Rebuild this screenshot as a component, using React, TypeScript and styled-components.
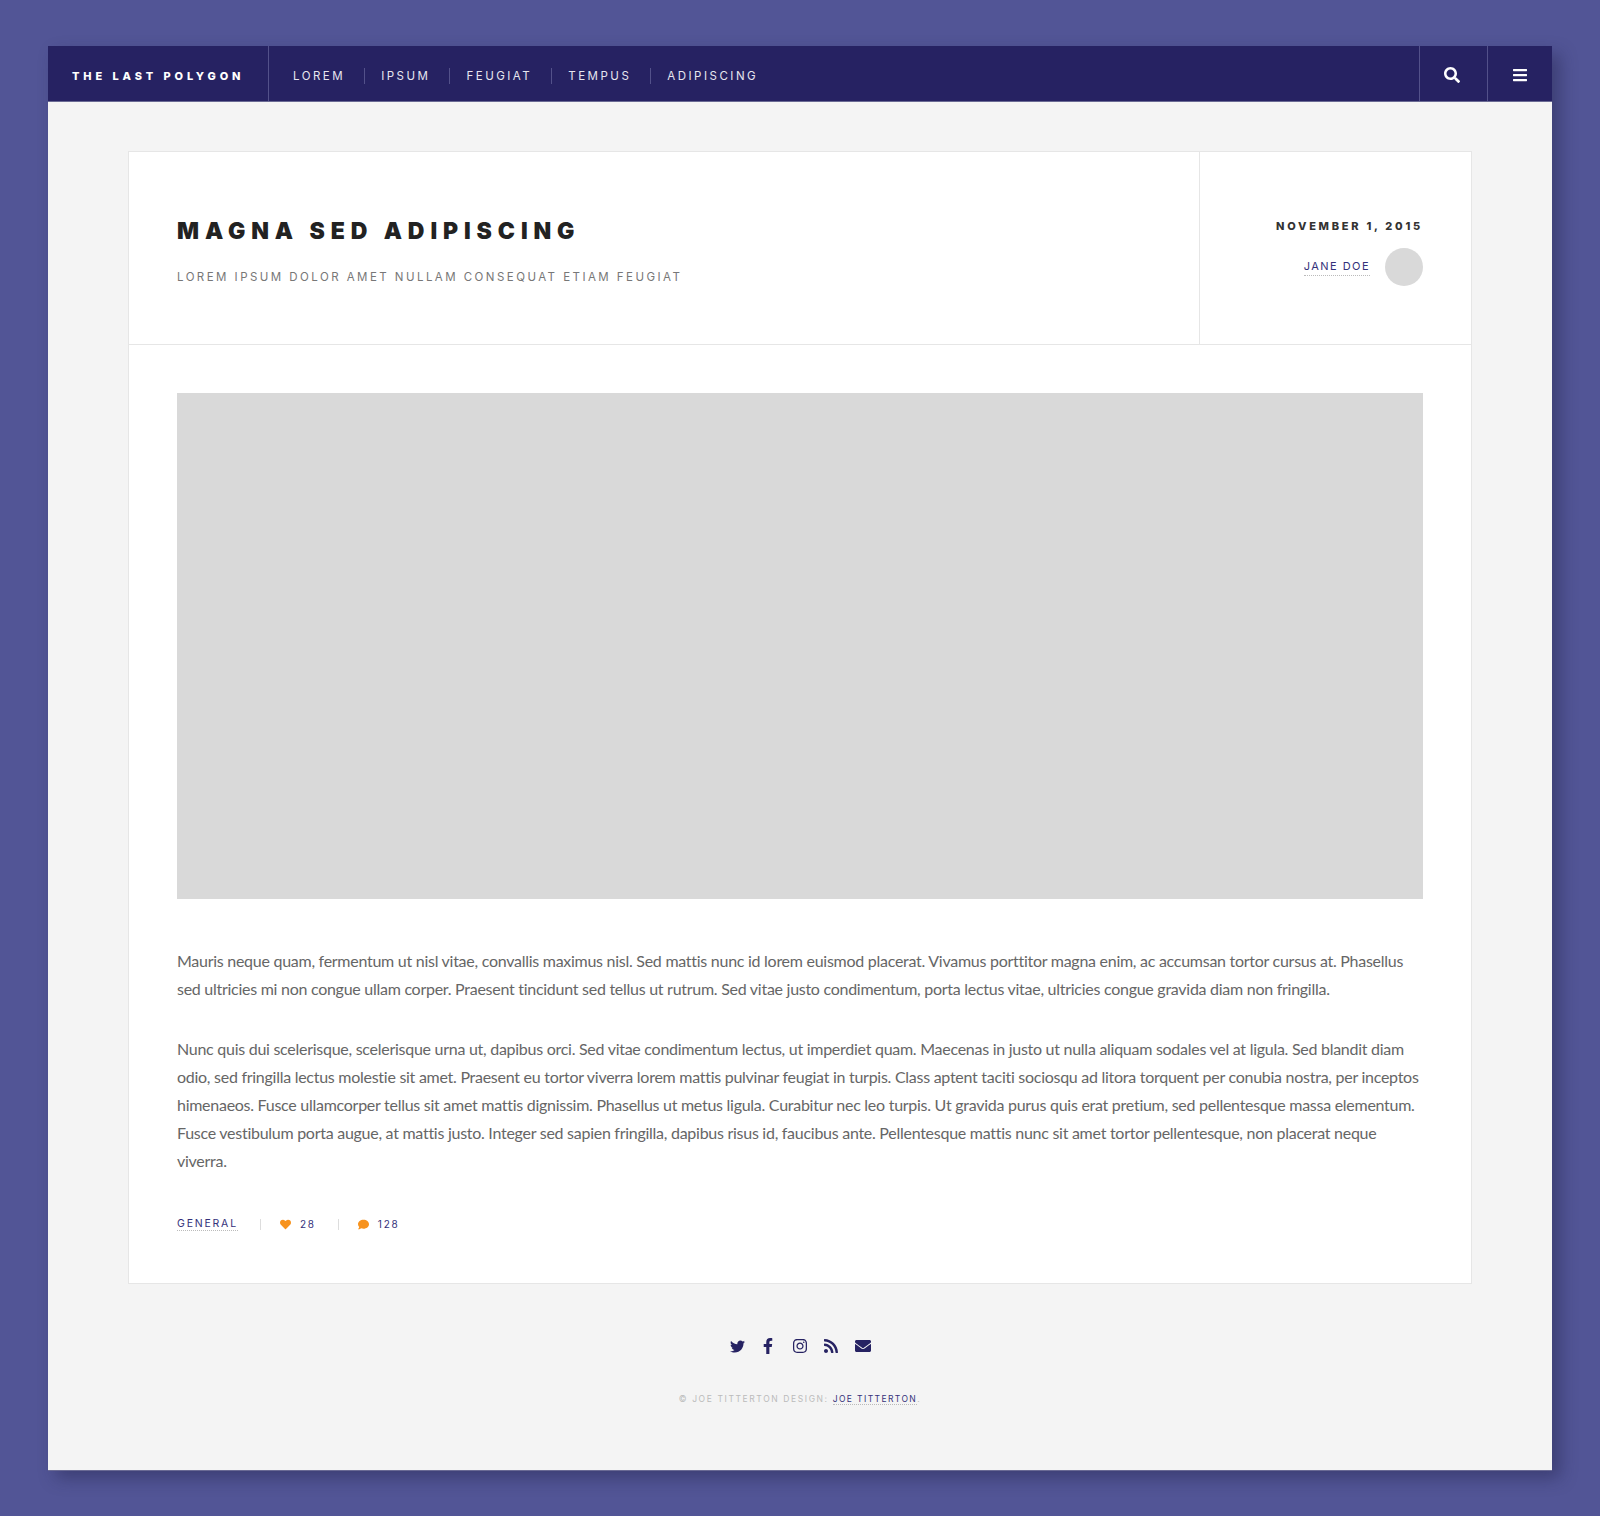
import React from "react";
import styled, { createGlobalStyle } from "styled-components";
import { FaTwitter, FaFacebookF, FaInstagram, FaRss, FaEnvelope, FaSearch, FaBars, FaHeart, FaComment } from "react-icons/fa";

const Global = createGlobalStyle`
  html, body { margin: 0; padding: 0; background: #525596; }
  * { box-sizing: border-box; }
`;

const display = `"Inter", "Liberation Sans", sans-serif`;
const navy = "#262262";
const linkBlue = "#34317a";

const Page = styled.div`
  padding: 46px 48px;
  height: 1516px;
`;
const Frame = styled.div`
  background: #f4f4f4;
  height: 1424px;
  box-shadow: 0 1px 0 #6a6a94, 8px 8px 16px rgba(30, 30, 70, 0.42);
`;
const Nav = styled.header`
  height: 55px;
  background: ${navy};
  display: flex;
  align-items: stretch;
  box-shadow: 0 1px 0 #6a6a94;
  font-family: ${display};
`;
const Brand = styled.div`
  width: 221px;
  border-right: 1px solid #53518a;
  display: flex;
  align-items: center;
  padding-left: 24px;
  padding-top: 4px;
  color: #fff;
  font-size: 11px;
  font-weight: 800;
  letter-spacing: 3.9px;
  white-space: nowrap;
`;
const Menu = styled.nav`
  flex: 1;
  display: flex;
  align-items: center;
  padding-left: 8px;
  padding-top: 4px;
`;
const MenuItem = styled.a<{ $first?: boolean }>`
  color: #e6e6ef;
  font-size: 11.5px;
  font-weight: 400;
  letter-spacing: 2.5px;
  padding: 0 19px 0 16px;
  line-height: 16px;
  border-left: ${(p) => (p.$first ? "none" : "1px solid #53518a")};
`;
const NavButton = styled.button<{ $width: number; $nudge: number }>`
  width: ${(p) => p.$width}px;
  background: none;
  border: none;
  border-left: 1px solid #53518a;
  color: #fff;
  font-size: 16px;
  display: flex;
  align-items: center;
  justify-content: center;
  padding: 3px ${(p) => p.$nudge}px 0 0;
`;
const Main = styled.main`
  padding: 50px 80px 0;
`;
const Card = styled.article`
  background: #fff;
  border: 1px solid #e6e6e6;
`;
const CardHead = styled.div`
  display: flex;
  height: 193px;
  border-bottom: 1px solid #e6e6e6;
`;
const TitleCell = styled.div`
  flex: 1;
  padding: 66px 48px 0;
`;
const Title = styled.h1`
  margin: 0;
  font-family: ${display};
  font-size: 23px;
  line-height: 26px;
  font-weight: 900;
  letter-spacing: 5.9px;
  color: #222;
`;
const Subtitle = styled.p`
  margin: 25px 0 0;
  font-family: ${display};
  font-size: 11.5px;
  line-height: 16px;
  letter-spacing: 2.45px;
  color: #777;
`;
const MetaCell = styled.div`
  width: 272px;
  border-left: 1px solid #e6e6e6;
  padding: 66px 48px 0 0;
  display: flex;
  flex-direction: column;
  align-items: flex-end;
`;
const DateText = styled.time`
  font-family: ${display};
  font-size: 11px;
  line-height: 16px;
  font-weight: 800;
  letter-spacing: 2.75px;
  color: #333;
`;
const Author = styled.div`
  display: flex;
  align-items: center;
  gap: 15px;
  margin-top: 14px;
`;
const DottedLink = styled.a`
  color: ${linkBlue};
  border-bottom: 1px dotted #bbb;
  font-family: ${display};
`;
const AuthorLink = styled(DottedLink)`
  font-size: 11px;
  line-height: 14px;
  padding-bottom: 2px;
  letter-spacing: 1.45px;
`;
const Avatar = styled.div`
  width: 38px;
  height: 38px;
  border-radius: 50%;
  background: #d9d9d9;
`;
const CardBody = styled.div`
  padding: 48px 48px 52px;
`;
const Picture = styled.div`
  height: 506px;
  background: #d9d9d9;
  margin-bottom: 48px;
`;
const Paragraph = styled.p`
  margin: 0 0 32px;
  font-family: "Lato", "Liberation Sans", sans-serif;
  font-size: 16px;
  line-height: 28px;
  letter-spacing: -0.27px;
  color: #666;
`;
const Stats = styled.div`
  display: flex;
  align-items: center;
  height: 16px;
  margin-top: 41px;
  margin-bottom: -1px;
  font-family: ${display};
`;
const StatLink = styled(DottedLink)`
  font-size: 10.5px;
  line-height: 13px;
  letter-spacing: 1.8px;
`;
const Stat = styled.span`
  display: flex;
  align-items: center;
  gap: 9px;
  margin-left: 22px;
  padding-left: 19px;
  border-left: 1px solid #ddd;
  line-height: 10px;
  color: ${linkBlue};
  letter-spacing: 1.8px;
  font-size: 10px;
  svg { color: #f7931e; font-size: 11px; }
`;
const Footer = styled.footer`
  display: flex;
  flex-direction: column;
  align-items: center;
  padding-top: 53px;
`;
const Socials = styled.div`
  display: flex;
  align-items: center;
  gap: 15.5px;
  color: ${navy};
  font-size: 16px;
  height: 18px;
`;
const TwitterIcon = styled(FaTwitter)`
  font-size: 15px;
`;
const Copy = styled.p`
  margin: 38px 0 0;
  font-family: ${display};
  font-size: 8.5px;
  line-height: 12px;
  letter-spacing: 1.6px;
  color: #bbb;
`;
const CopyLink = styled(DottedLink)`
  letter-spacing: 1.4px;
`;

const items = ["LOREM", "IPSUM", "FEUGIAT", "TEMPUS", "ADIPISCING"];

export default function App() {
  return (
    <Page>
      <Global />
      <Frame>
        <Nav>
          <Brand>THE LAST POLYGON</Brand>
          <Menu>
            {items.map((t, i) => (
              <MenuItem key={t} $first={i === 0}>{t}</MenuItem>
            ))}
          </Menu>
          <NavButton $width={68} $nudge={3} aria-label="Search"><FaSearch /></NavButton>
          <NavButton $width={65} $nudge={0} aria-label="Menu"><FaBars /></NavButton>
        </Nav>
        <Main>
          <Card>
            <CardHead>
              <TitleCell>
                <Title>MAGNA SED ADIPISCING</Title>
                <Subtitle>LOREM IPSUM DOLOR AMET NULLAM CONSEQUAT ETIAM FEUGIAT</Subtitle>
              </TitleCell>
              <MetaCell>
                <DateText>NOVEMBER 1, 2015</DateText>
                <Author>
                  <AuthorLink>JANE DOE</AuthorLink>
                  <Avatar />
                </Author>
              </MetaCell>
            </CardHead>
            <CardBody>
              <Picture />
              <Paragraph>Mauris neque quam, fermentum ut nisl vitae, convallis maximus nisl. Sed mattis nunc id lorem euismod placerat. Vivamus porttitor magna enim, ac accumsan tortor cursus at. Phasellus sed ultricies mi non congue ullam corper. Praesent tincidunt sed tellus ut rutrum. Sed vitae justo condimentum, porta lectus vitae, ultricies congue gravida diam non fringilla.</Paragraph>
              <Paragraph>Nunc quis dui scelerisque, scelerisque urna ut, dapibus orci. Sed vitae condimentum lectus, ut imperdiet quam. Maecenas in justo ut nulla aliquam sodales vel at ligula. Sed blandit diam odio, sed fringilla lectus molestie sit amet. Praesent eu tortor viverra lorem mattis pulvinar feugiat in turpis. Class aptent taciti sociosqu ad litora torquent per conubia nostra, per inceptos himenaeos. Fusce ullamcorper tellus sit amet mattis dignissim. Phasellus ut metus ligula. Curabitur nec leo turpis. Ut gravida purus quis erat pretium, sed pellentesque massa elementum. Fusce vestibulum porta augue, at mattis justo. Integer sed sapien fringilla, dapibus risus id, faucibus ante. Pellentesque mattis nunc sit amet tortor pellentesque, non placerat neque viverra.</Paragraph>
              <Stats>
                <StatLink>GENERAL</StatLink>
                <Stat><FaHeart />28</Stat>
                <Stat><FaComment />128</Stat>
              </Stats>
            </CardBody>
          </Card>
          <Footer>
            <Socials>
              <TwitterIcon />
              <FaFacebookF />
              <FaInstagram />
              <FaRss />
              <FaEnvelope />
            </Socials>
            <Copy>© JOE TITTERTON DESIGN: <CopyLink>JOE TITTERTON</CopyLink>.</Copy>
          </Footer>
        </Main>
      </Frame>
    </Page>
  );
}
